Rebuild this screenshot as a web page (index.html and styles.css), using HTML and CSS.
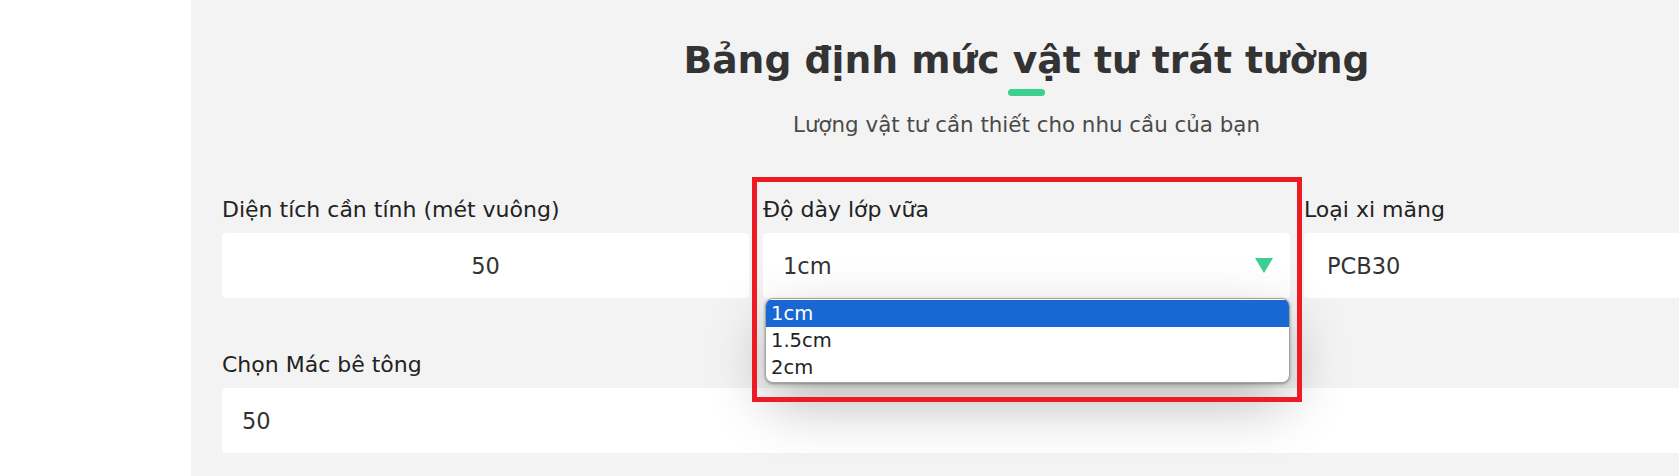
FILE: index.html
```html
<!DOCTYPE html>
<html lang="vi">
<head>
<meta charset="utf-8">
<title>Bảng định mức vật tư trát tường</title>
<link rel="stylesheet" href="styles.css">
</head>
<body>
<main class="panel">
  <div class="inner">
    <header class="heading">
      <h1 class="title">Bảng định mức vật tư trát tường</h1>
      <span class="title-bar"></span>
      <p class="subtitle">Lượng vật tư cần thiết cho nhu cầu của bạn</p>
    </header>
    <section class="grid">
      <div class="field">
        <label class="label">Diện tích cần tính (mét vuông)</label>
        <div class="control control-center">50</div>
      </div>
      <div class="field field-focus">
        <label class="label">Độ dày lớp vữa</label>
        <div class="select-wrap">
          <div class="control control-select">
            <span>1cm</span>
            <svg class="caret" viewBox="0 0 18 15" aria-hidden="true"><polygon points="0,0 18,0 9,15"/></svg>
          </div>
          <ul class="options">
            <li class="option is-selected">1cm</li>
            <li class="option">1.5cm</li>
            <li class="option">2cm</li>
          </ul>
        </div>
        <div class="annotation"></div>
      </div>
      <div class="field">
        <label class="label">Loại xi măng</label>
        <div class="control control-wide-pad">PCB30</div>
      </div>
    </section>
    <section class="field field-wide">
      <label class="label">Chọn Mác bê tông</label>
      <div class="control">50</div>
    </section>
  </div>
</main>
</body>
</html>
```

FILE: styles.css
```css
html {
  overflow: hidden;
}

body {
  margin: 0;
  background: #ffffff;
  font-family: "DejaVu Sans", sans-serif;
  color: #222222;
}

.panel {
  margin-left: 191px;
  min-height: 476px;
  box-sizing: border-box;
  padding: 38px 0 0 31px;
  overflow: hidden;
  background: #f3f3f3;
}

.inner {
  width: 1609px;
}

.heading {
  display: flex;
  flex-direction: column;
  align-items: center;
}

.title {
  margin: 0;
  font-size: 37.7px;
  line-height: 44px;
  font-weight: 700;
  color: #333333;
  white-space: nowrap;
}

.title-bar {
  width: 37px;
  height: 7px;
  margin-top: 7px;
  border-radius: 4px;
  background: #3ccf8e;
}

.subtitle {
  margin: 16px 0 0;
  font-size: 21.4px;
  line-height: 26px;
  font-weight: 400;
  color: #4a4a4a;
}

.grid {
  display: grid;
  grid-template-columns: repeat(3, 527px);
  column-gap: 14px;
  margin-top: 59px;
}

.field {
  display: flex;
  flex-direction: column;
}

.field-focus {
  position: relative;
}

.field-wide {
  margin-top: 54px;
}

.label {
  font-size: 22px;
  line-height: 26px;
  margin-bottom: 10px;
  color: #222222;
}

.control {
  height: 65px;
  box-sizing: border-box;
  display: flex;
  align-items: center;
  padding: 0 20px;
  border-radius: 4px;
  background: #ffffff;
  font-size: 22.5px;
  color: #333333;
}

.control-center {
  justify-content: center;
}

.control-wide-pad {
  padding-left: 23px;
}

.control-select {
  justify-content: space-between;
  padding-right: 17px;
}

.caret {
  width: 18px;
  height: 15px;
  fill: #3ecf8e;
}

.select-wrap {
  position: relative;
}

.options {
  position: absolute;
  top: 100%;
  left: 2px;
  z-index: 5;
  width: 525px;
  box-sizing: border-box;
  margin: 0;
  padding: 1px 0;
  list-style: none;
  overflow: hidden;
  border: 1px solid #a5a5a5;
  border-radius: 8px;
  background: #ffffff;
  box-shadow: 0 1px 3px rgba(0, 0, 0, 0.35), 0 22px 60px -4px rgba(0, 0, 0, 0.3);
}

.option {
  height: 27px;
  line-height: 27px;
  padding-left: 5px;
  font-size: 19.5px;
  color: #222222;
}

.is-selected {
  background: #1967d2;
  color: #ffffff;
}

.annotation {
  position: absolute;
  left: -11px;
  top: -20px;
  z-index: 6;
  width: 550px;
  height: 225px;
  box-sizing: border-box;
  border: 5px solid #ed1c24;
  pointer-events: none;
}
```
